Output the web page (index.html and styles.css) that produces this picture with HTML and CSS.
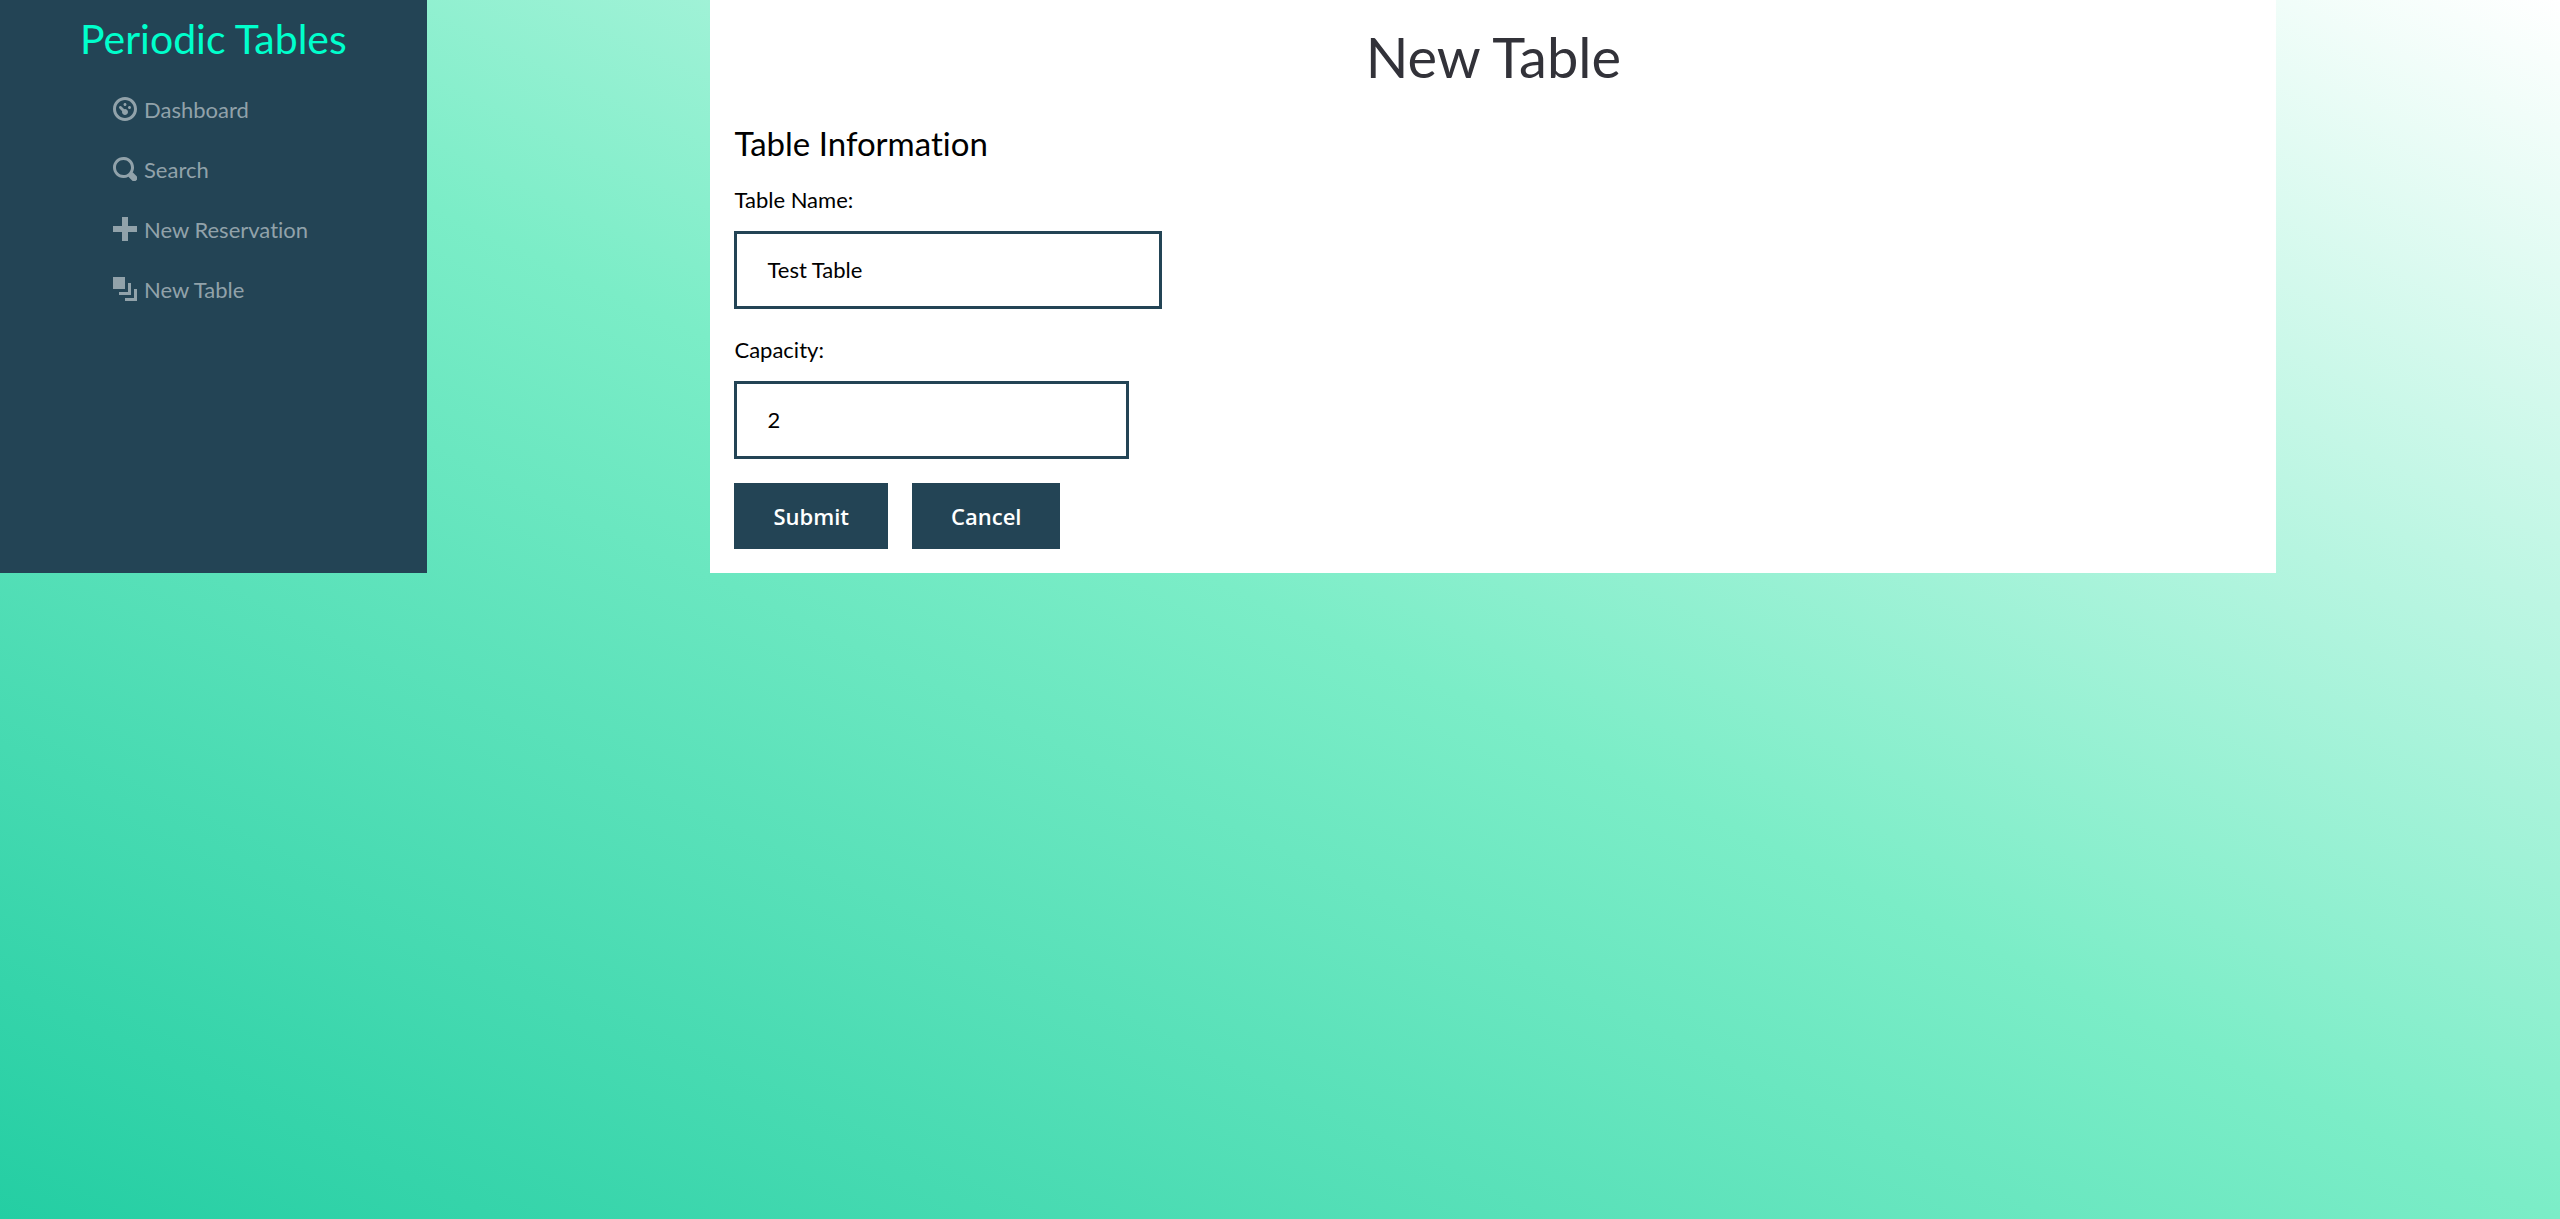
FILE: index.html
```html
<!DOCTYPE html>
<html lang="en">
<head>
  <meta charset="utf-8">
  <meta name="viewport" content="width=device-width, initial-scale=1">
  <title>Periodic Tables</title>
  <link rel="stylesheet" href="styles.css">
</head>
<body>
  <div class="layout">
    <nav class="sidebar">
      <a class="brand" href="#">Periodic Tables</a>
      <ul class="menu">
        <li><a class="menu-link" href="#"><svg class="icon" viewBox="0 0 8 8" aria-hidden="true"><path d="M4 0c-2.200 0-4 1.800-4 4s1.800 4 4 4 4-1.800 4-4-1.800-4-4-4zm0 1c1.660 0 3 1.340 3 3s-1.340 3-3 3-3-1.340-3-3 1.340-3 3-3zm0 1c-.28 0-.5.22-.5.5s.22.5.5.5.5-.22.5-.5-.22-.5-.5-.5zm-1.660 1a.5.5 0 0 0-.19.84l.91.91c-.02.08-.06.16-.06.25 0 .55.45 1 1 1s1-.45 1-1-.45-1-1-1c-.09 0-.17.04-.25.06l-.91-.91a.5.5 0 0 0-.44-.16.5.5 0 0 0-.06 0zm3.160 0c-.28 0-.5.22-.5.5s.22.5.5.5.5-.22.5-.5-.22-.5-.5-.5z"/></svg>Dashboard</a></li>
        <li><a class="menu-link" href="#"><svg class="icon" viewBox="0 0 8 8" aria-hidden="true"><path d="M3.500 0c-1.930 0-3.500 1.570-3.500 3.500s1.570 3.500 3.500 3.500c.59 0 1.170-.14 1.660-.41a1 1 0 0 0 .13.13l1 1a1.020 1.020 0 1 0 1.440-1.440l-1-1a1 1 0 0 0-.16-.13c.27-.49.44-1.060.44-1.660 0-1.930-1.550-3.500-3.500-3.500zm0 1c1.390 0 2.500 1.110 2.500 2.500 0 .66-.24 1.270-.66 1.720-.01.01-.02.02-.03.03a1 1 0 0 0-.13.13c-.44.4-1.040.63-1.690.63-1.390 0-2.500-1.110-2.500-2.500s1.110-2.500 2.500-2.500z"/></svg>Search</a></li>
        <li><a class="menu-link" href="#"><svg class="icon" viewBox="0 0 8 8" aria-hidden="true"><path d="M3 0v3h-3v2h3v3h2v-3h3v-2h-3v-3h-2z"/></svg>New Reservation</a></li>
        <li><a class="menu-link" href="#"><svg class="icon" viewBox="0 0 8 8" aria-hidden="true"><path d="M0 0v4h4v-4h-4zm5 2v3h-3v1h4v-4h-1zm2 2v3h-3v1h4v-4h-1z"/></svg>New Table</a></li>
      </ul>
    </nav>
    <div class="content">
      <main class="panel">
        <h1 class="page-title">New Table</h1>
        <form>
          <h2 class="section-title">Table Information</h2>
          <div class="field">
            <label class="label" for="table_name">Table Name:</label>
            <input class="input" id="table_name" name="table_name" type="text" value="Test Table">
          </div>
          <div class="field">
            <label class="label" for="capacity">Capacity:</label>
            <input class="input input-number" id="capacity" name="capacity" type="number" min="1" value="2">
          </div>
          <div class="actions">
            <button class="button" type="submit">Submit</button>
            <button class="button" type="button">Cancel</button>
          </div>
        </form>
      </main>
    </div>
  </div>
</body>
</html>
```

FILE: styles.css
```css
* {
  box-sizing: border-box;
}

body {
  margin: 0;
  min-height: 100vh;
  background: linear-gradient(to top right, #24cea3, #7bedc7, #ffffff);
  color: #000;
  font-family: "Gill Sans", "Gill Sans MT", Lato, sans-serif;
  font-size: 22px;
  font-variant-ligatures: none;
  line-height: 36px;
}

.layout {
  display: flex;
}

.sidebar {
  flex: 0 0 16.67%;
  padding: 12px 24px 24px;
  background: #234455;
}

.brand {
  display: block;
  margin-bottom: 26px;
  color: #00ffcc;
  font-size: 41px;
  line-height: 54px;
  text-align: center;
  text-decoration: none;
}

.menu {
  display: flex;
  flex-direction: column;
  gap: 24px;
  margin: 0;
  padding: 0 0 0 89px;
  list-style: none;
}

.menu-link {
  display: flex;
  gap: 7px;
  color: #91a2aa;
  text-decoration: none;
}

.icon {
  width: 24px;
  height: 24px;
  margin-top: 5px;
  fill: currentColor;
}

.content {
  flex: 1;
  display: flex;
  justify-content: center;
}

.panel {
  width: 73.4%;
  padding: 24px;
  background: #fff;
}

.page-title {
  margin: 0 0 30px;
  color: #323239;
  font-size: 56px;
  font-weight: 400;
  line-height: 66px;
  text-align: center;
}

.section-title {
  margin: 0 0 15px;
  font-size: 33px;
  font-weight: 400;
  line-height: 46px;
}

.field {
  display: flex;
  flex-direction: column;
  align-items: flex-start;
  gap: 12px;
  margin-bottom: 22px;
}

.label {
  line-height: 38px;
}

.input {
  width: 428px;
  max-width: 100%;
  height: 78px;
  padding: 0 30px 2px;
  border: 3px solid #234455;
  border-radius: 0;
  background: #fff;
  color: #000;
  font: inherit;
}

.input-number {
  width: 395px;
  appearance: textfield;
}

.actions {
  display: flex;
  gap: 24px;
  padding-top: 2px;
}

.button {
  height: 66px;
  padding: 0 39px;
  border: 0;
  background: #234455;
  color: #fff;
  font-family: "Trebuchet MS", "Open Sans", sans-serif;
  font-size: 22px;
  font-weight: 600;
}
```
